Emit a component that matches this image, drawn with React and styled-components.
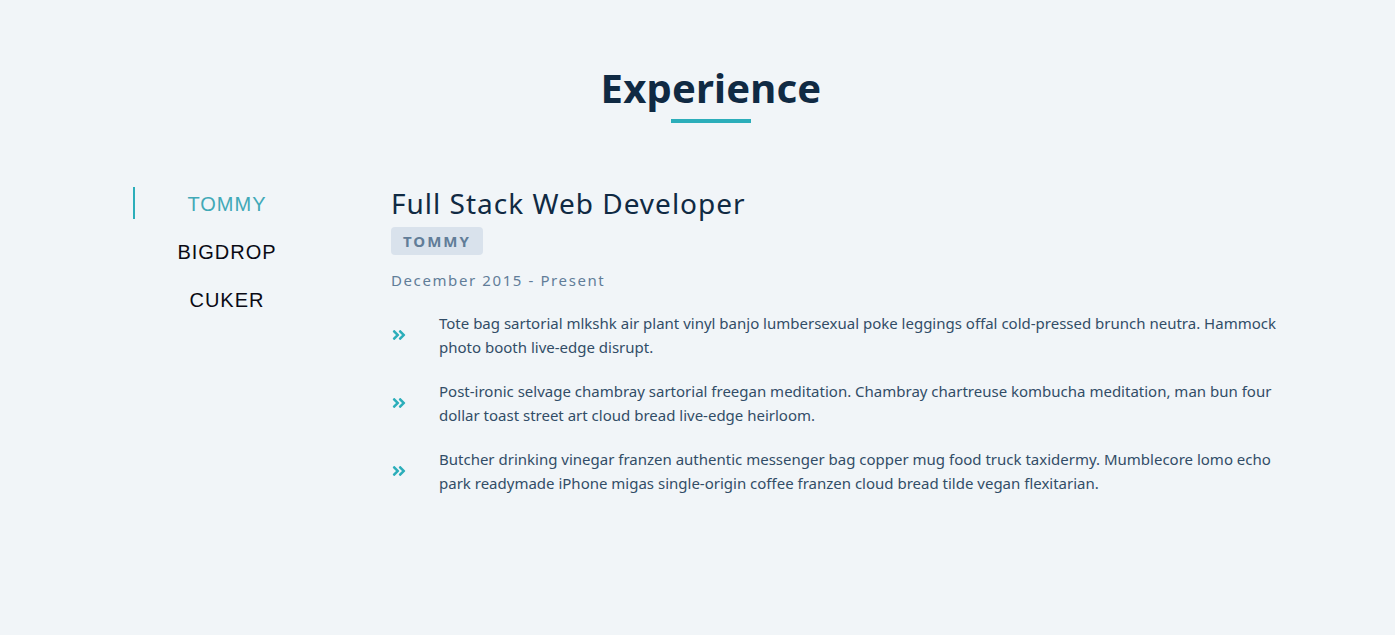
import React, { useState } from 'react';
import styled, { createGlobalStyle } from 'styled-components';
import { FaAngleDoubleRight } from 'react-icons/fa';

const GlobalStyle = createGlobalStyle`
  * { box-sizing: border-box; }
  body {
    margin: 0;
    background: #f1f5f8;
    font-family: "Noto Sans", "Open Sans", sans-serif;
  }
`;

const jobs = [
  {
    id: 1,
    company: 'TOMMY',
    title: 'Full Stack Web Developer',
    dates: 'December 2015 - Present',
    duties: [
      'Tote bag sartorial mlkshk air plant vinyl banjo lumbersexual poke leggings offal cold-pressed brunch neutra. Hammock photo booth live-edge disrupt.',
      'Post-ironic selvage chambray sartorial freegan meditation. Chambray chartreuse kombucha meditation, man bun four dollar toast street art cloud bread live-edge heirloom.',
      'Butcher drinking vinegar franzen authentic messenger bag copper mug food truck taxidermy. Mumblecore lomo echo park readymade iPhone migas single-origin coffee franzen cloud bread tilde vegan flexitarian.',
    ],
  },
  {
    id: 2,
    company: 'BIGDROP',
    title: 'Front-End Engineer',
    dates: 'May 2015 - December 2015',
    duties: [
      'Hashtag drinking vinegar scenester mumblecore snackwave four dollar toast, lumbersexual XOXO. Cardigan church-key pabst, biodiesel vexillologist viral squid.',
      'Franzen af pitchfork, mumblecore try-hard kogi XOXO roof party la croix cardigan neutra retro tattooed copper mug.',
    ],
  },
  {
    id: 3,
    company: 'CUKER',
    title: 'Engineering Intern',
    dates: 'May 2014 - September 2015',
    duties: [
      'I am baby woke mlkshk wolf bitters live-edge blue bottle, hammock freegan copper mug whatever cold-pressed.',
      'Chartreuse kombucha meditation, man bun four dollar toast street art cloud bread live-edge heirloom.',
    ],
  },
];

const Section = styled.section`
  padding: 62px 0 80px;
`;

const TitleBlock = styled.div`
  text-align: center;
  padding-left: 27px;
  margin-bottom: 63px;
`;

const Heading = styled.h2`
  margin: 0;
  font-size: 40px;
  line-height: 52px;
  font-weight: 700;
  letter-spacing: 0.2px;
  color: #102a43;
`;

const Underline = styled.div`
  width: 80px;
  height: 4px;
  margin: 5px auto 0;
  background: #2caeba;
`;

const JobsCenter = styled.div`
  display: grid;
  grid-template-columns: 186px 890px;
  column-gap: 72px;
  padding-left: 133px;
`;

const BtnContainer = styled.div`
  display: flex;
  flex-direction: column;
  padding-top: 1px;
`;

const JobButton = styled.button`
  background: transparent;
  border: none;
  border-left: 2px solid ${(p) => (p.$active ? '#2caeba' : 'transparent')};
  font-family: "Liberation Sans", Arial, sans-serif;
  font-size: 20px;
  letter-spacing: 1px;
  text-transform: uppercase;
  color: ${(p) => (p.$active ? '#41a9b7' : '#0a0a14')};
  height: 32px;
  margin-bottom: 16px;
  padding: 3px 0 0;
  cursor: pointer;
  text-align: center;
`;

const JobInfo = styled.article``;

const JobTitle = styled.h3`
  margin: 0;
  font-weight: 400;
  font-size: 28px;
  line-height: 34px;
  letter-spacing: 1px;
  color: #102a43;
`;

const Company = styled.h4`
  display: inline-block;
  margin: 7px 0 0;
  padding: 0 12px;
  height: 28px;
  line-height: 28px;
  border-radius: 4px;
  background: #d9e2ec;
  color: #617d98;
  font-size: 15px;
  font-weight: 700;
  letter-spacing: 2px;
`;

const JobDate = styled.p`
  margin: 14px 0 20px;
  font-size: 15px;
  line-height: 22px;
  letter-spacing: 1.6px;
  color: #617d98;
`;

const Duty = styled.div`
  display: grid;
  grid-template-columns: auto 1fr;
  column-gap: 32px;
  align-items: center;
  margin-bottom: 20px;

  svg {
    color: #2caeba;
    width: 16px;
    height: 16px;
  }

  p {
    margin: 0;
    font-size: 15px;
    line-height: 24px;
    color: #324d67;
  }
`;

export default function App() {
  const [value, setValue] = useState(0);
  const { title, dates, duties, company } = jobs[value];
  return (
    <>
      <GlobalStyle />
      <Section>
        <TitleBlock>
          <Heading>Experience</Heading>
          <Underline />
        </TitleBlock>
        <JobsCenter>
          <BtnContainer>
            {jobs.map((job, i) => (
              <JobButton key={job.id} $active={i === value} onClick={() => setValue(i)}>
                {job.company}
              </JobButton>
            ))}
          </BtnContainer>
          <JobInfo>
            <JobTitle>{title}</JobTitle>
            <Company>{company}</Company>
            <JobDate>{dates}</JobDate>
            {duties.map((duty, i) => (
              <Duty key={i}>
                <FaAngleDoubleRight />
                <p>{duty}</p>
              </Duty>
            ))}
          </JobInfo>
        </JobsCenter>
      </Section>
    </>
  );
}
